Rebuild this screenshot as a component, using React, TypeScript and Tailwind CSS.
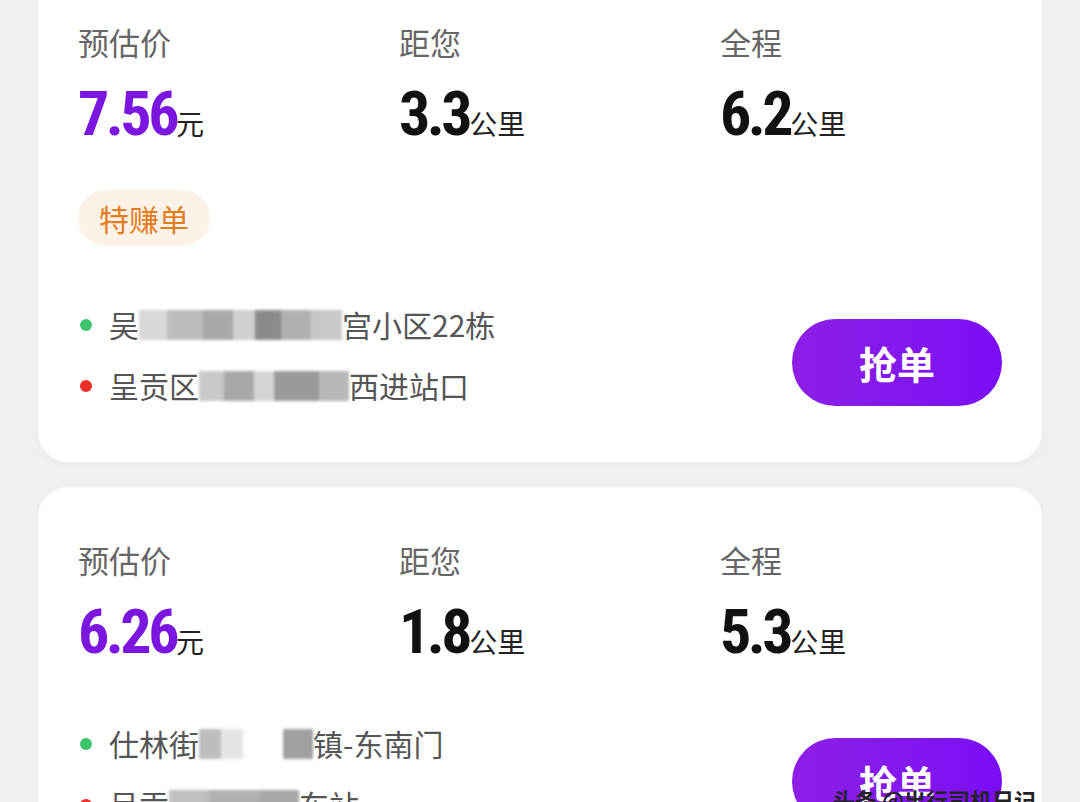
import React from 'react';

type Seg = { w: number; c: string };

const cjk = '"Noto Sans CJK SC", "Noto Sans", sans-serif';
const num = '"Liberation Sans Narrow", "Roboto Condensed", Roboto, sans-serif';

// pixelated blur that hides part of an address
function Mosaic({ segs }: { segs: Seg[] }) {
  return (
    <span className="inline-flex h-[30px] items-stretch align-middle blur-[1.5px]">
      {segs.map((s, i) => (
        <span key={i} style={{ width: s.w, background: s.c }} />
      ))}
    </span>
  );
}

function Stat({ label, value, unit, purple }: { label: string; value: string; unit: string; purple?: boolean }) {
  return (
    <div className="w-[321px] shrink-0">
      <div className="h-[40px] text-[31px] leading-[40px] text-[#666666]" style={{ fontFamily: cjk }}>
        {label}
      </div>
      <div className="mt-[21px] flex h-[62px] items-baseline leading-[62px]">
        <span
          className={`text-[62px] font-bold tracking-[-3.5px] ${purple ? 'text-[#7a16e0]' : 'text-[#111111]'}`}
          style={{ fontFamily: num }}
        >
          {value}
        </span>
        <span className="ml-[0px] text-[28px] text-[#222222]" style={{ fontFamily: cjk }}>
          {unit}
        </span>
      </div>
    </div>
  );
}

function Row({ dot, children }: { dot: string; children: React.ReactNode }) {
  return (
    <div className="flex h-[61px] items-center text-[30px] text-[#555555]" style={{ fontFamily: cjk }}>
      <span className={`ml-[2px] mr-[17px] h-[12px] w-[12px] shrink-0 rounded-full ${dot}`} />
      <span className="flex items-center whitespace-nowrap">{children}</span>
    </div>
  );
}

function GrabButton() {
  return (
    <button
      className="mt-[25px] flex h-[87px] w-[210px] shrink-0 items-center justify-center rounded-full bg-gradient-to-r from-[#8d1ee6] to-[#7a0cf6] text-[38px] font-bold text-white"
      style={{ fontFamily: cjk }}
    >
      抢单
    </button>
  );
}

export default function App() {
  return (
    <div className="relative h-[802px] w-[1080px] overflow-hidden bg-[#eef0f2]">
      <div className="flex flex-col gap-[25px] px-[38px]">
        {/* order 1 */}
        <div className="mt-[-31px] rounded-[30px] bg-white px-[40px] pb-[46px] pt-[53px] shadow-[0_2px_10px_rgba(0,0,0,0.03)]">
          <div className="flex">
            <Stat label="预估价" value="7.56" unit="元" purple />
            <Stat label="距您" value="3.3" unit="公里" />
            <Stat label="全程" value="6.2" unit="公里" />
          </div>
          <div className="mt-[45px] flex">
            <span
              className="flex h-[56px] items-center rounded-full bg-[#fdf2e8] px-[21px] text-[30px] text-[#e27d1e]"
              style={{ fontFamily: cjk }}
            >
              特赚单
            </span>
          </div>
          <div className="mt-[48px] flex items-start justify-between">
            <div>
              <Row dot="bg-[#3cc46e]">
                吴
                <Mosaic
                  segs={[
                    { w: 28, c: '#d8d8d8' },
                    { w: 36, c: '#bcbcbc' },
                    { w: 30, c: '#a9a9a9' },
                    { w: 22, c: '#d0d0d0' },
                    { w: 26, c: '#8a8a8a' },
                    { w: 30, c: '#b0b0b0' },
                    { w: 31, c: '#c8c8c8' },
                  ]}
                />
                宫小区22栋
              </Row>
              <Row dot="bg-[#ee3028]">
                呈贡区
                <Mosaic
                  segs={[
                    { w: 25, c: '#c8c8c8' },
                    { w: 30, c: '#a8a8a8' },
                    { w: 20, c: '#d6d6d6' },
                    { w: 45, c: '#9a9a9a' },
                    { w: 30, c: '#b8b8b8' },
                  ]}
                />
                西进站口
              </Row>
            </div>
            <GrabButton />
          </div>
        </div>

        {/* order 2 */}
        <div className="rounded-[30px] bg-white px-[40px] pb-[46px] pt-[53px] shadow-[0_2px_10px_rgba(0,0,0,0.03)]">
          <div className="flex">
            <Stat label="预估价" value="6.26" unit="元" purple />
            <Stat label="距您" value="1.8" unit="公里" />
            <Stat label="全程" value="5.3" unit="公里" />
          </div>
          <div className="mt-[50px] flex items-start justify-between">
            <div>
              <Row dot="bg-[#3cc46e]">
                仕林街
                <Mosaic
                  segs={[
                    { w: 22, c: '#bdbdbd' },
                    { w: 22, c: '#e4e4e4' },
                    { w: 40, c: '#ffffff' },
                    { w: 30, c: '#a0a0a0' },
                  ]}
                />
                镇-东南门
              </Row>
              <Row dot="bg-[#ee3028]">
                呈贡
                <Mosaic
                  segs={[
                    { w: 40, c: '#c0c0c0' },
                    { w: 50, c: '#b0b0b0' },
                    { w: 40, c: '#a8a8a8' },
                  ]}
                />
                车站
              </Row>
            </div>
            <GrabButton />
          </div>
        </div>
      </div>
      <div
        className="absolute bottom-[-14px] right-[44px] text-[22px] font-bold text-[#222222]"
        style={{ fontFamily: cjk }}
      >
        头条 @出行司机日记
      </div>
    </div>
  );
}
